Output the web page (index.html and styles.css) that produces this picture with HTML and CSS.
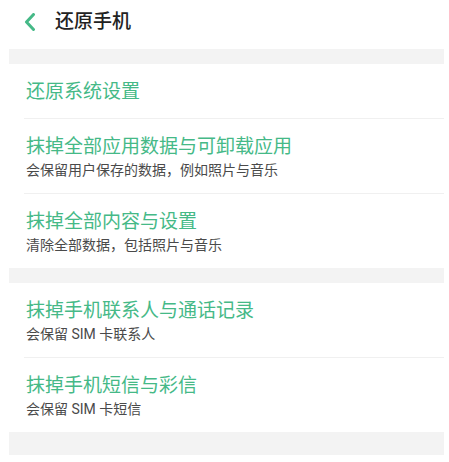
FILE: index.html
```html
<!DOCTYPE html>
<html lang="zh-CN">
<head>
    <meta charset="UTF-8">
    <meta name="viewport" content="width=device-width, initial-scale=1.0">
    <title>还原手机</title>
    <link rel="stylesheet" href="styles.css">
</head>
<body>
    <div class="page">
        <header class="topbar">
            <span class="back">
                <svg width="12" height="18" viewBox="0 0 12 18">
                    <path d="M9.5 1.5 L2.5 9 L9.5 16.5" fill="none" stroke="#45b987" stroke-width="3" stroke-linecap="round" stroke-linejoin="round"/>
                </svg>
            </span>
            <h1>还原手机</h1>
        </header>

        <div class="band"></div>
        <ul class="list">
            <li class="item">
                <div class="title">还原系统设置</div>
            </li>
            <li class="item">
                <div class="title">抹掉全部应用数据与可卸载应用</div>
                <div class="sub">会保留用户保存的数据，例如照片与音乐</div>
            </li>
            <li class="item">
                <div class="title">抹掉全部内容与设置</div>
                <div class="sub">清除全部数据，包括照片与音乐</div>
            </li>
        </ul>

        <div class="band"></div>
        <ul class="list">
            <li class="item">
                <div class="title">抹掉手机联系人与通话记录</div>
                <div class="sub">会保留 SIM 卡联系人</div>
            </li>
            <li class="item">
                <div class="title">抹掉手机短信与彩信</div>
                <div class="sub">会保留 SIM 卡短信</div>
            </li>
        </ul>

        <div class="band band-end"></div>
    </div>
</body>
</html>
```

FILE: styles.css
```css
/* Общие стили */
body {
    margin: 0;
    padding: 0;
    background: #ffffff;
    font-family: Roboto, "Noto Sans CJK SC", sans-serif;
    color: #222;
}

.page {
    margin: 0 5px 0 9px;
}

.topbar {
    height: 43px;
    padding-bottom: 6px;
    display: flex;
    align-items: center;
}

.back {
    display: flex;
    margin-left: 15px;
}

.topbar h1 {
    margin: 0 0 0 19px;
    font-size: 19px;
    font-weight: 500;
    line-height: 24px;
    color: #222;
}

.band {
    height: 15px;
    background: #f3f3f3;
}

.band-end {
    height: 23px;
}

.list {
    list-style: none;
    margin: 0;
    padding: 0;
}

.item {
    margin-left: 15px;
    padding: 16px 0 14px 2px;
    border-bottom: 1px solid #f0f0f0;
}

.item:last-child {
    border-bottom: none;
}

.title {
    font-size: 19px;
    line-height: 24px;
    color: #45b987;
}

.sub {
    margin-top: 2px;
    font-size: 14px;
    line-height: 18px;
    color: #4a4a4a;
}
```
